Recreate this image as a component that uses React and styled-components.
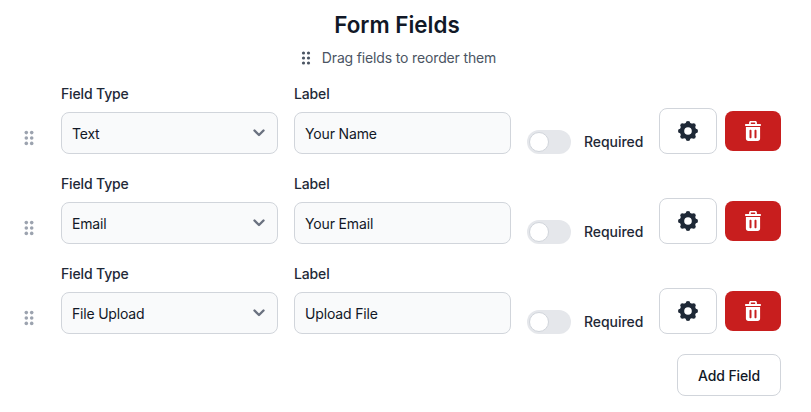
import React from 'react'
import styled, { createGlobalStyle } from 'styled-components'

const fields = [
  { type: 'Text', label: 'Your Name' },
  { type: 'Email', label: 'Your Email' },
  { type: 'File Upload', label: 'Upload File' },
]

const lobes = [0, 45, 90, 135, 180, 225, 270, 315]

function Dots({ size, r, gap }) {
  const cx = [size / 2 - gap / 2, size / 2 + gap / 2]
  const cy = [size / 2 - gap, size / 2, size / 2 + gap]
  return (
    <svg width={size} height={size} viewBox={`0 0 ${size} ${size}`} fill='currentColor'>
      {cy.map(y => cx.map(x => <circle key={`${x}-${y}`} cx={x} cy={y} r={r} />))}
    </svg>
  )
}

function CogIcon() {
  return (
    <svg width='20' height='20' viewBox='0 0 20 20' fill='currentColor'>
      <circle cx='10' cy='10' r='6' fill='none' stroke='currentColor' strokeWidth='4.4' />
      {lobes.map(a => (
        <circle key={a} cx={10 + 7.7 * Math.cos(a * Math.PI / 180)} cy={10 + 7.7 * Math.sin(a * Math.PI / 180)} r='2.3' />
      ))}
    </svg>
  )
}

function TrashIcon() {
  return (
    <svg width='16' height='20' viewBox='0 0 16 20' fill='currentColor'>
      <path
        fillRule='evenodd'
        clipRule='evenodd'
        d='M5.800 0h4.400C11.200 0 11.900.7 11.900 1.700V3h3.100c.6 0 1 .4 1 1s-.4 1-1 1H1C.4 5 0 4.600 0 4s.4-1 1-1h3.100V1.700C4.100.7 4.800 0 5.800 0zM5.800 1.600V3h4.400V1.600zM.9 6h14.200v11.500c0 1.500-1 2.500-2.500 2.500H3.400C1.900 20 .9 19 .9 17.500zM5.500 8.800c-.6 0-1 .4-1 1v6.400c0 .6.4 1 1 1s1-.4 1-1V9.800c0-.6-.4-1-1-1zm5 0c-.6 0-1 .4-1 1v6.400c0 .6.4 1 1 1s1-.4 1-1V9.800c0-.6-.4-1-1-1z'
      />
    </svg>
  )
}

export default function App() {
  return (
    <Page>
      <GlobalStyle />
      <Header>
        <Title>Form Fields</Title>
        <Hint>
          <HintDots><Dots size={16} r={1.6} gap={5} /></HintDots>
          Drag fields to reorder them
        </Hint>
      </Header>
      <List>
        {fields.map(field => (
          <Row key={field.label}>
            <Handle><Dots size={20} r={2} gap={6} /></Handle>
            <Column>
              <FieldLabel>Field Type</FieldLabel>
              <SelectWrap>
                <Select defaultValue={field.type}>
                  {fields.map(f => <option key={f.type}>{f.type}</option>)}
                </Select>
                <Chevron width='20' height='20' viewBox='0 0 20 20' fill='none' stroke='currentColor' strokeWidth='2.4' strokeLinecap='round' strokeLinejoin='round'>
                  <path d='M5.500 7.500l4.500 4.500 4.500-4.500' />
                </Chevron>
              </SelectWrap>
            </Column>
            <Column>
              <FieldLabel>Label</FieldLabel>
              <Input defaultValue={field.label} />
            </Column>
            <RequiredWrap>
              <Toggle><Knob /></Toggle>
              <RequiredText>Required</RequiredText>
            </RequiredWrap>
            <Actions>
              <SettingsButton><CogIcon /></SettingsButton>
              <DeleteButton><TrashIcon /></DeleteButton>
            </Actions>
          </Row>
        ))}
      </List>
      <Footer>
        <AddButton>Add Field</AddButton>
      </Footer>
    </Page>
  )
}

const GlobalStyle = createGlobalStyle`
body {
  margin: 0;
  background: #fff;
  font-family: Inter, "Liberation Sans", sans-serif;
}
`

const Page = styled.div`
width: 811px;
height: 412px;
box-sizing: border-box;
padding: 11px 30px 0 20px;
overflow: hidden;
`

const Header = styled.div`
padding-right: 7px;
`

const Title = styled.h2`
margin: 0;
text-align: center;
font-size: 22.4px;
line-height: 28px;
font-weight: 600;
color: #111827;
`

const Hint = styled.p`
margin: 9px 0 0;
display: flex;
justify-content: center;
align-items: center;
gap: 8px;
font-size: 14px;
line-height: 20px;
letter-spacing: -0.15px;
color: #4b5563;
`

const HintDots = styled.span`
display: flex;
color: #4b5563;
`

const List = styled.div`
margin-top: 16px;
display: flex;
flex-direction: column;
gap: 20px;
`

const Row = styled.div`
display: flex;
align-items: flex-end;
gap: 16px;
`

const Handle = styled.span`
display: flex;
flex: none;
width: 18px;
justify-content: center;
margin: 0 7px 6px 0;
color: #9ca3af;
`

const Column = styled.div`
flex: none;
width: 217px;
display: flex;
flex-direction: column;
gap: 8px;
`

const FieldLabel = styled.label`
font-size: 14px;
line-height: 20px;
font-weight: 500;
letter-spacing: -0.15px;
color: #1f2937;
`

const SelectWrap = styled.div`
position: relative;
`

const Select = styled.select`
appearance: none;
display: block;
width: 100%;
height: 42px;
box-sizing: border-box;
padding: 0 32px 0 10px;
border: 1px solid #d1d5db;
border-radius: 8px;
background: #f9fafb;
font: 400 14px Inter, "Liberation Sans", sans-serif;
letter-spacing: -0.2px;
color: #111827;
`

const Chevron = styled.svg`
position: absolute;
right: 9px;
top: 11px;
color: #6b7280;
pointer-events: none;
`

const Input = styled.input`
display: block;
width: 100%;
height: 42px;
box-sizing: border-box;
padding: 0 10px;
border: 1px solid #d1d5db;
border-radius: 8px;
background: #f9fafb;
font: 400 14px Inter, "Liberation Sans", sans-serif;
letter-spacing: -0.15px;
color: #111827;
`

const RequiredWrap = styled.div`
flex: none;
display: flex;
align-items: center;
gap: 13px;
`

const Toggle = styled.span`
display: flex;
align-items: center;
width: 44px;
height: 24px;
box-sizing: border-box;
padding: 0 2px;
border-radius: 12px;
background: #e5e7eb;
`

const Knob = styled.span`
width: 20px;
height: 20px;
box-sizing: border-box;
border: 1px solid #d1d5db;
border-radius: 50%;
background: #fff;
`

const RequiredText = styled.span`
width: 59px;
font-size: 14px;
line-height: 24px;
font-weight: 500;
letter-spacing: -0.05px;
white-space: nowrap;
color: #1f2937;
`

const Actions = styled.div`
flex: none;
display: flex;
align-items: center;
gap: 8px;
`

const SettingsButton = styled.button`
display: flex;
align-items: center;
justify-content: center;
width: 58px;
height: 46px;
padding: 0;
border: 1px solid #d1d5db;
border-radius: 8px;
background: #fff;
color: #1f2937;
`

const DeleteButton = styled.button`
display: flex;
align-items: center;
justify-content: center;
width: 56px;
height: 40px;
padding: 0;
border: 0;
border-radius: 8px;
background: #c81e1e;
color: #fff;
`

const Footer = styled.div`
display: flex;
justify-content: flex-end;
margin-top: 20px;
`

const AddButton = styled.button`
width: 104px;
height: 42px;
padding: 0;
border: 1px solid #d1d5db;
border-radius: 8px;
background: #fff;
font: 500 14px Inter, "Liberation Sans", sans-serif;
letter-spacing: -0.1px;
color: #111827;
`
